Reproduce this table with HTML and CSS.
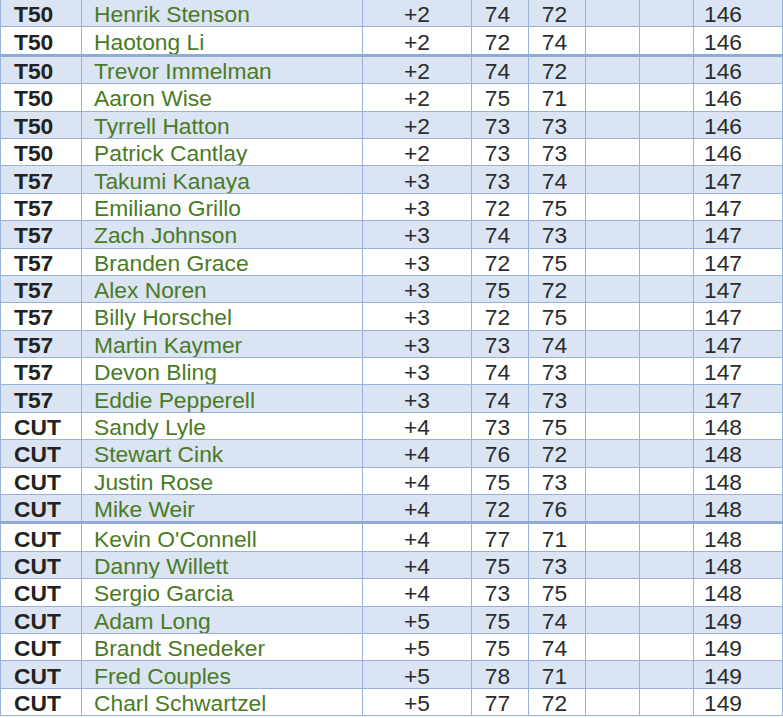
FILE: index.html
```html
<!DOCTYPE html>
<html lang="en">
<head>
<meta charset="utf-8">
<title>Leaderboard</title>
<link rel="stylesheet" href="styles.css">
</head>
<body>
<table class="board">
<colgroup>
<col class="c-pos"><col class="c-name"><col class="c-score"><col class="c-r1"><col class="c-r2"><col class="c-r3"><col class="c-r4"><col class="c-tot">
</colgroup>
<tbody>
<tr class="alt"><td class="pos">T50</td><td class="name">Henrik Stenson</td><td class="num">+2</td><td class="rd">74</td><td class="rd">72</td><td></td><td></td><td class="tot">146</td></tr>
<tr class="sep"><td class="pos">T50</td><td class="name">Haotong Li</td><td class="num">+2</td><td class="rd">72</td><td class="rd">74</td><td></td><td></td><td class="tot">146</td></tr>
<tr class="alt"><td class="pos">T50</td><td class="name">Trevor Immelman</td><td class="num">+2</td><td class="rd">74</td><td class="rd">72</td><td></td><td></td><td class="tot">146</td></tr>
<tr><td class="pos">T50</td><td class="name">Aaron Wise</td><td class="num">+2</td><td class="rd">75</td><td class="rd">71</td><td></td><td></td><td class="tot">146</td></tr>
<tr class="alt"><td class="pos">T50</td><td class="name">Tyrrell Hatton</td><td class="num">+2</td><td class="rd">73</td><td class="rd">73</td><td></td><td></td><td class="tot">146</td></tr>
<tr><td class="pos">T50</td><td class="name">Patrick Cantlay</td><td class="num">+2</td><td class="rd">73</td><td class="rd">73</td><td></td><td></td><td class="tot">146</td></tr>
<tr class="alt"><td class="pos">T57</td><td class="name">Takumi Kanaya</td><td class="num">+3</td><td class="rd">73</td><td class="rd">74</td><td></td><td></td><td class="tot">147</td></tr>
<tr><td class="pos">T57</td><td class="name">Emiliano Grillo</td><td class="num">+3</td><td class="rd">72</td><td class="rd">75</td><td></td><td></td><td class="tot">147</td></tr>
<tr class="alt"><td class="pos">T57</td><td class="name">Zach Johnson</td><td class="num">+3</td><td class="rd">74</td><td class="rd">73</td><td></td><td></td><td class="tot">147</td></tr>
<tr><td class="pos">T57</td><td class="name">Branden Grace</td><td class="num">+3</td><td class="rd">72</td><td class="rd">75</td><td></td><td></td><td class="tot">147</td></tr>
<tr class="alt"><td class="pos">T57</td><td class="name">Alex Noren</td><td class="num">+3</td><td class="rd">75</td><td class="rd">72</td><td></td><td></td><td class="tot">147</td></tr>
<tr><td class="pos">T57</td><td class="name">Billy Horschel</td><td class="num">+3</td><td class="rd">72</td><td class="rd">75</td><td></td><td></td><td class="tot">147</td></tr>
<tr class="alt"><td class="pos">T57</td><td class="name">Martin Kaymer</td><td class="num">+3</td><td class="rd">73</td><td class="rd">74</td><td></td><td></td><td class="tot">147</td></tr>
<tr><td class="pos">T57</td><td class="name">Devon Bling</td><td class="num">+3</td><td class="rd">74</td><td class="rd">73</td><td></td><td></td><td class="tot">147</td></tr>
<tr class="alt"><td class="pos">T57</td><td class="name">Eddie Pepperell</td><td class="num">+3</td><td class="rd">74</td><td class="rd">73</td><td></td><td></td><td class="tot">147</td></tr>
<tr><td class="pos">CUT</td><td class="name">Sandy Lyle</td><td class="num">+4</td><td class="rd">73</td><td class="rd">75</td><td></td><td></td><td class="tot">148</td></tr>
<tr class="alt"><td class="pos">CUT</td><td class="name">Stewart Cink</td><td class="num">+4</td><td class="rd">76</td><td class="rd">72</td><td></td><td></td><td class="tot">148</td></tr>
<tr><td class="pos">CUT</td><td class="name">Justin Rose</td><td class="num">+4</td><td class="rd">75</td><td class="rd">73</td><td></td><td></td><td class="tot">148</td></tr>
<tr class="alt sep"><td class="pos">CUT</td><td class="name">Mike Weir</td><td class="num">+4</td><td class="rd">72</td><td class="rd">76</td><td></td><td></td><td class="tot">148</td></tr>
<tr><td class="pos">CUT</td><td class="name">Kevin O'Connell</td><td class="num">+4</td><td class="rd">77</td><td class="rd">71</td><td></td><td></td><td class="tot">148</td></tr>
<tr class="alt"><td class="pos">CUT</td><td class="name">Danny Willett</td><td class="num">+4</td><td class="rd">75</td><td class="rd">73</td><td></td><td></td><td class="tot">148</td></tr>
<tr><td class="pos">CUT</td><td class="name">Sergio Garcia</td><td class="num">+4</td><td class="rd">73</td><td class="rd">75</td><td></td><td></td><td class="tot">148</td></tr>
<tr class="alt"><td class="pos">CUT</td><td class="name">Adam Long</td><td class="num">+5</td><td class="rd">75</td><td class="rd">74</td><td></td><td></td><td class="tot">149</td></tr>
<tr><td class="pos">CUT</td><td class="name">Brandt Snedeker</td><td class="num">+5</td><td class="rd">75</td><td class="rd">74</td><td></td><td></td><td class="tot">149</td></tr>
<tr class="alt"><td class="pos">CUT</td><td class="name">Fred Couples</td><td class="num">+5</td><td class="rd">78</td><td class="rd">71</td><td></td><td></td><td class="tot">149</td></tr>
<tr><td class="pos">CUT</td><td class="name">Charl Schwartzel</td><td class="num">+5</td><td class="rd">77</td><td class="rd">72</td><td></td><td></td><td class="tot">149</td></tr>
</tbody>
</table>
</body>
</html>
```
FILE: styles.css
```css
html, body {
  margin: 0;
  padding: 0;
  background: #ffffff;
}

.board {
  border-collapse: collapse;
  table-layout: fixed;
  width: 782px;
  font-family: "Liberation Sans", Arial, sans-serif;
  font-size: 22.8px;
  color: #2b2b2b;
}

.c-pos { width: 81px; }
.c-name { width: 281px; }
.c-score { width: 109px; }
.c-r1 { width: 57px; }
.c-r2 { width: 57px; }
.c-r3 { width: 54px; }
.c-r4 { width: 54px; }
.c-tot { width: 89px; }

.board td {
  border: 1px solid #98b2da;
  height: 24.4px;
  padding: 2px 0 0 0;
  line-height: 24px;
  white-space: nowrap;
  overflow: hidden;
  vertical-align: middle;
}

.board tr:first-child td {
  border-top: none;
}

.board tr.alt td {
  background: #dae4f3;
}

.board tr.sep td {
  border-bottom: 3px solid #8eaad6;
}

.pos {
  font-weight: bold;
  padding-left: 13px !important;
  color: #222222;
}

.name {
  color: #4b7a25;
  padding-left: 12px !important;
}

.num {
  text-align: center;
}

.rd {
  text-align: center;
  padding-right: 5px !important;
}

.tot {
  text-align: left;
  padding-left: 10px !important;
}
```
